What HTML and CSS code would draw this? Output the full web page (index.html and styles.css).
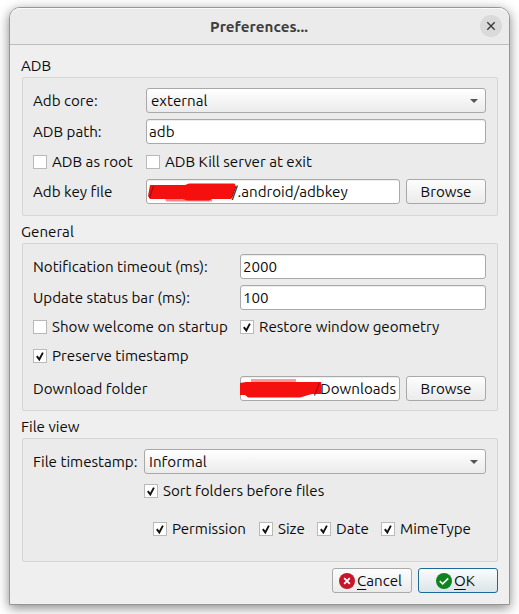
FILE: index.html
```html
<!DOCTYPE html>
<html lang="en">
<head>
<meta charset="utf-8">
<title>Preferences...</title>
<link rel="stylesheet" href="styles.css">
</head>
<body>
<svg class="defs" width="0" height="0" aria-hidden="true">
  <symbol id="check" viewBox="0 0 14 14"><path d="M3.8 7.1 6.3 10.4 9.9 3.6" fill="none" stroke="#111" stroke-width="1.9"/></symbol>
</svg>
<main class="window">
  <header class="titlebar">
    <h1><span class="t title">Preferences...</span></h1>
    <button class="close" aria-label="Close"><svg width="22" height="22"><path d="M7.3 7.3 14.7 14.7M14.7 7.3 7.3 14.7" stroke="#3a3a3a" stroke-width="1.4"/></svg></button>
  </header>
  <div class="content">
    <h2><span class="t">ADB</span></h2>
    <section class="group adb">
      <div class="row"><label><span class="t">Adb core:</span></label><div class="field combo"><span class="t">external</span></div></div>
      <div class="row"><label><span class="t">ADB path:</span></label><div class="field"><span class="t">adb</span></div></div>
      <div class="checks">
        <div class="check first"><i class="box"></i><span class="t">ADB as root</span></div>
        <div class="check"><i class="box"></i><span class="t">ADB Kill server at exit</span></div>
      </div>
      <div class="row"><label><span class="t">Adb key file</span></label>
        <div class="field key"><span class="t">/.android/adbkey</span>
          <svg class="scribble" width="92" height="25"><g class="soft"><path d="M18 19H65V22.5H19Z" fill="#f88"/><path d="M3 6H38L42 4.500H87Q89 5 88 9L84 20H65L62 21.500H40L36 20H3L1 17Z" fill="#f51010"/></g><path d="M2.500 19 6.500 7M84.500 19 89 7" stroke="#a30d0d" stroke-width="1.1"/></svg>
        </div>
        <button class="btn"><span class="t">Browse</span></button></div>
    </section>
    <h2><span class="t">General</span></h2>
    <section class="group general">
      <div class="row"><label><span class="t">Notification timeout (ms):</span></label><div class="field"><span class="t">2000</span></div></div>
      <div class="row"><label><span class="t">Update status bar (ms):</span></label><div class="field"><span class="t">100</span></div></div>
      <div class="checks">
        <div class="check first"><i class="box"></i><span class="t">Show welcome on startup</span></div>
        <div class="check"><i class="box"><svg><use href="#check"/></svg></i><span class="t">Restore window geometry</span></div>
      </div>
      <div class="checks">
        <div class="check"><i class="box"><svg><use href="#check"/></svg></i><span class="t">Preserve timestamp</span></div>
      </div>
      <div class="row"><label><span class="t">Download folder</span></label>
        <div class="field download"><span class="t">Downloads</span>
          <svg class="scribble" width="84" height="25"><g class="soft"><path d="M11 3H56V7H11Z" fill="#f99"/><path d="M0 7 6 6H81L82 18H72L60 21.500H8L5 19H0Z" fill="#f51010"/></g><path d="M74.500 19.500 79.500 7" stroke="#a30d0d" stroke-width="1.1"/></svg>
        </div>
        <button class="btn"><span class="t">Browse</span></button></div>
    </section>
    <h2><span class="t">File view</span></h2>
    <section class="group files">
      <div class="row"><label><span class="t">File timestamp:</span></label><div class="field combo"><span class="t">Informal</span></div></div>
      <div class="checks sort"><div class="check"><i class="box"><svg><use href="#check"/></svg></i><span class="t">Sort folders before files</span></div></div>
      <div class="checks columns">
        <div class="check c1"><i class="box"><svg><use href="#check"/></svg></i><span class="t">Permission</span></div>
        <div class="check c2"><i class="box"><svg><use href="#check"/></svg></i><span class="t">Size</span></div>
        <div class="check c3"><i class="box"><svg><use href="#check"/></svg></i><span class="t">Date</span></div>
        <div class="check"><i class="box"><svg><use href="#check"/></svg></i><span class="t">MimeType</span></div>
      </div>
    </section>
    <footer>
      <button class="btn icon"><svg width="16" height="16"><circle cx="8" cy="8" r="8" fill="#c7162b"/><path d="M5.2 5.2 10.8 10.8M10.8 5.2 5.2 10.8" stroke="#fff" stroke-width="1.8"/></svg><span class="t"><u>C</u>ancel</span></button>
      <button class="btn icon default"><svg width="16" height="16"><circle cx="8" cy="8" r="8" fill="#0e8420"/><path d="M3.8 8.1 6.7 10.8 12.2 5.4" fill="none" stroke="#fff" stroke-width="1.6"/></svg><span class="t"><u>O</u>K</span></button>
    </footer>
  </div>
</main>
</body>
</html>
```

FILE: styles.css
```css
* { box-sizing: border-box; }
body {
  margin: 0; width: 519px; height: 614px; overflow: hidden; padding: 7px 9px;
  background: #fff; color: #0c0c0c;
  font: 15.15px/20px Ubuntu, "Noto Sans", sans-serif;
}
.defs { position: absolute; }
h1, h2 { margin: 0; font: inherit; }
.t { white-space: nowrap; }
.window {
  width: 501px; height: 598px; background: #efefef;
  border: 1px solid #969696; border-radius: 11px 11px 0 0;
  box-shadow: 0 3px 12px rgba(0,0,0,.48);
}
.titlebar {
  height: 37px; display: grid; grid-template-columns: 32px 1fr 32px; align-items: center;
  background: #ebebeb; border-bottom: 1px solid #bcbcbc; border-radius: 10px 10px 0 0;
  box-shadow: inset 0 1px #fafafa;
}
.titlebar h1 { grid-column: 2; text-align: center; font-weight: 700; color: #3d3d3d; padding: 2px 1px 0 0; letter-spacing: .06px; }
.close { width: 22px; height: 22px; padding: 0; border: 0; border-radius: 50%; background: #dadada; margin-left: 3px; }
.close svg { display: block; }
.content { padding: 0 11px 0 12px; }
h2 { height: 20px; margin-left: -1px; }
h2:first-child { margin-top: 11px; }
.group { border: 1px solid #d5d5d5; border-radius: 2px; background: #ebebeb; padding: 10px 11px 0 10px; margin-bottom: 6px; }
.adb { height: 139px; margin-top: 1px; }
.general { height: 168px; margin-top: 1px; }
.files { height: 124px; margin-top: 1px; }
.row { display: flex; height: 25px; margin-bottom: 6px; align-items: center; }
.row label { flex: none; width: 113px; }
.general label { width: 207px; }
.files label { width: 111px; }
.field {
  position: relative; flex: 1; height: 25px; border: 1px solid #a9a9a9; border-radius: 3px;
  background: #fff; box-shadow: inset 0 1px #ededed; padding: 2px 0 0 2px; white-space: nowrap;
}
.combo { background: linear-gradient(#fff, #ebebeb); padding-left: 4px; box-shadow: none; }
.combo::after {
  content: ""; position: absolute; right: 7px; top: 10px;
  border: 4px solid transparent; border-top-color: #555; border-bottom: 0;
}
.btn {
  width: 80px; height: 25px; flex: none; margin-left: 6px; padding: 0;
  display: flex; justify-content: center; align-items: center;
  border: 1px solid #a9a9a9; border-radius: 3px; background: linear-gradient(#fdfdfd, #ebebeb);
  font: inherit; color: inherit;
}
.checks { display: flex; height: 17px; align-items: center; }
.adb .checks { margin: 9px 0; height: 17px; }
.general .checks { margin: 0 0 12px; }
.general .row + .checks { margin-top: 8px; }
.general .checks + .row { margin-top: 0; }
.check { display: flex; align-items: center; gap: 5px; }
.adb .first { width: 113px; }
.general .first { width: 207px; }
.sort { margin: 8px 0 0 111px; }
.columns { margin: 21px 0 0 120px; }
.c1 { width: 106px; }
.c2 { width: 58px; }
.c3 { width: 64px; }
.box { display: block; flex: none; width: 14px; height: 14px; border: 1px solid #b9b9b9; background: #fff; }
.box svg { display: block; width: 14px; height: 14px; margin: -1px; }
.scribble { position: absolute; left: 0; top: -1px; }
.soft { filter: blur(.6px); }
.key { padding-left: 85px; }
.download { padding-left: 79px; }
.download .scribble { left: -1px; }
footer { display: flex; justify-content: flex-end; }
.icon { gap: 2px; padding-right: 3px; }
.default { padding-right: 5px; border-color: #1c6a97; background: linear-gradient(#fafcfd, #dbe4e8); }
u { text-underline-offset: 3px; text-decoration-thickness: 1px; }
```
